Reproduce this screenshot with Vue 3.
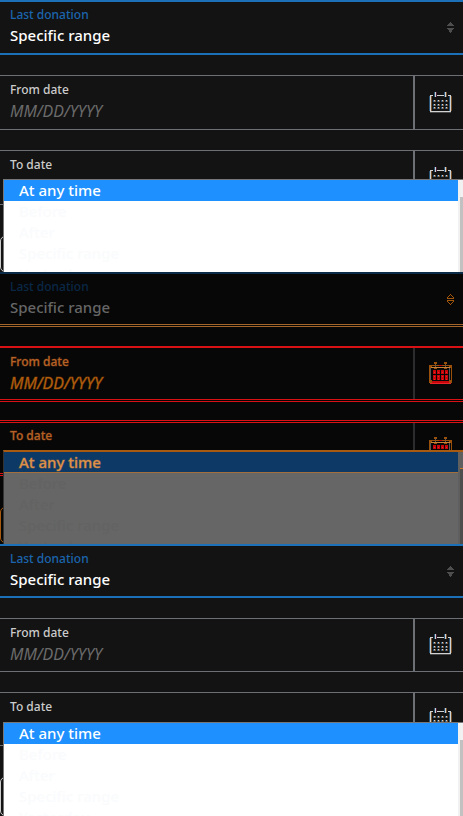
<script setup>
const panels = [
  { id: 'before', kind: 'roomy' },
  { id: 'changes', kind: 'diff' },
  { id: 'after', kind: 'compact' }
]
const options = ['At any time', 'Before', 'After', 'Specific range', 'Yesterday']
const dates = ['From date', 'To date']
const columns = [4, 8, 12, 16]
const rows = [8, 12, 15]
</script>

<template>
  <main class="page">
    <section v-for="p in panels" :key="p.id" class="panel" :class="p.kind">
      <div class="field range">
        <div class="copy">
          <label class="label" :for="p.id + '-range'">Last donation</label>
          <select :id="p.id + '-range'" class="control">
            <option>Specific range</option>
          </select>
        </div>
        <svg class="sorter" viewBox="0 0 7 11" width="7" height="11" aria-hidden="true" shape-rendering="crispEdges">
          <path v-if="p.kind === 'diff'" d="M3 0h1v1H3zM2 1h1v1H2zM4 1h1v1H4zM1 2h1v1H1zM5 2h1v1H5zM0 3h1v1H0zM6 3h1v1H6zM0 4h7v1H0zM0 6h7v1H0zM0 7h1v1H0zM6 7h1v1H6zM1 8h1v1H1zM5 8h1v1H5zM2 9h1v1H2zM4 9h1v1H4zM3 10h1v1H3z" />
          <template v-else>
            <path d="M3 0h1v1h1v1h1v1h1v1H0V3h1V2h1V1h1z" />
            <path d="M0 6h7v1H6v1H5v2H4v1H3v-1H2V8H1V7H0z" />
          </template>
        </svg>
      </div>

      <div v-for="(d, i) in dates" :key="d" class="field date">
        <div class="copy">
          <label class="label" :for="p.id + '-date-' + i">{{ d }}</label>
          <input :id="p.id + '-date-' + i" class="control" type="text" placeholder="MM/DD/YYYY" />
        </div>
        <button class="picker" type="button" :aria-label="d">
          <svg v-if="p.kind === 'diff'" class="calendar" viewBox="0 0 23 23" width="23" height="23" aria-hidden="true" shape-rendering="crispEdges">
            <path class="steel" d="M1 6h1v14H1zM20 6h1v14h-1zM6 2h1v5H6zM16 2h1v5h-1z" />
            <path class="rust" d="M5 0h3v2H5zM15 0h3v2h-3zM0 3h23v1H0zM0 4h3v2H0zM20 4h3v2h-3zM0 6h1v12H0zM22 6h1v12h-1zM5 6h3v1H5zM15 6h3v1h-3zM0 18h3v3H0zM20 18h3v3h-3z" />
            <path class="amber" d="M2 5h19v1H2z" />
            <path class="red" d="M10 3h3v1h-3zM3 19h17v2H3z" />
            <path class="bright" d="M1 21h21v1H1z" />
            <g v-for="x in columns" :key="x">
              <path class="red" :d="`M${x} 8h3v4h-3zM${x} 13h3v5h-3z`" />
              <path class="bright" :d="`M${x + 1} 10h1v1h-1zM${x + 1} 14h1v1h-1zM${x + 1} 17h1v1h-1z`" />
            </g>
          </svg>
          <svg v-else class="calendar" viewBox="0 0 23 22" width="23" height="22" aria-hidden="true" shape-rendering="crispEdges">
            <path class="cool" d="M0 4h1v15H0zM20 4h1v15h-1zM5 0h1v5H5zM15 0h1v5h-1z" />
            <path class="warm" d="M2 4h1v15H2zM22 4h1v15h-1zM17 0h1v5h-1z" />
            <path class="plum" d="M7 0h1v5H7z" />
            <path class="ink" d="M1 3h3v1H2v15h19V4h-2V3h3v17H1zM8 3h7v1H8zM6 0h1v5H6zM16 0h1v5h-1z" />
            <template v-for="y in rows" :key="y">
              <g v-for="x in columns" :key="x">
                <rect class="cool" :x="x" :y="y" width="1" height="2" />
                <rect class="warm" :x="x + 2" :y="y" width="1" height="2" />
                <rect class="ink" :x="x + 1" :y="y" width="1" height="1" />
                <rect class="dim" :x="x + 1" :y="y + 1" width="1" height="1" />
              </g>
            </template>
            <path class="shade" d="M1 20h21v1H1z" />
          </svg>
        </button>
        <div v-if="i === 1" class="menu">
          <ul class="options" role="listbox" aria-label="Last donation">
            <li v-for="(o, n) in options" :key="o" role="option" :aria-selected="n === 0" class="option">{{ o }}</li>
          </ul>
          <div class="track"><div class="thumb"></div></div>
        </div>
      </div>
      <div class="outline"></div>
    </section>
  </main>
</template>

<style>
body {
  margin: 0;
  background: #131313;
}
</style>

<style scoped>
.page {
  display: grid;
  grid-template-rows: repeat(3, minmax(0, 1fr));
  height: 100vh;
  min-height: 600px;
  font-family: "Noto Sans", sans-serif;
  font-weight: 500;
}
.panel {
  --row: 55px;
  --blue: #1b70b8;
  --line: #6c6f73;
  --label: #cccccc;
  --placeholder: #6b6b6b;
  overflow: hidden;
  background: #131313;
}
.panel.compact {
  --row: 54px;
}
.field {
  box-sizing: border-box;
  position: relative;
  display: flex;
  height: var(--row);
  margin-bottom: 20px;
  border-top: 1px solid var(--line);
  border-bottom: 1px solid var(--line);
}
.range {
  align-items: center;
  border-top: 2px solid var(--blue);
  border-bottom: 2px solid var(--blue);
}
.copy {
  display: flex;
  flex: 1;
  flex-direction: column;
  align-self: stretch;
  min-width: 0;
  padding: 5px 0 0 10px;
}
.range .copy {
  padding-top: 4px;
}
.label {
  font-size: 12px;
  line-height: 18px;
  color: var(--label);
}
.range .label {
  color: #1b65ae;
}
.control {
  appearance: none;
  width: 100%;
  height: 24px;
  margin: 0;
  padding: 0;
  border: 0;
  outline: 0;
  background: transparent;
  font-family: inherit;
  font-size: 15px;
  font-weight: 500;
  line-height: 24px;
  color: #ffffff;
}
.range .control {
  height: 22px;
  line-height: 22px;
}
.control::placeholder {
  font-size: 16px;
  font-weight: 400;
  font-style: italic;
  color: var(--placeholder);
  opacity: 1;
}
.sorter {
  margin-right: 9px;
  fill: #4e4e4e;
}
.picker {
  box-sizing: border-box;
  display: flex;
  flex: 0 0 50px;
  justify-content: center;
  align-items: center;
  margin: 0;
  padding: 0 0 0 2px;
  border: 0;
  border-left: 2px solid var(--line);
  background: transparent;
}
.ink {
  fill: #d2d2d2;
}
.cool {
  fill: #285579;
}
.warm {
  fill: #775129;
}
.plum {
  fill: #4a1f35;
}
.dim {
  fill: #777777;
}
.shade {
  fill: #4b4b4b;
}
.steel {
  fill: #56585a;
}
.rust {
  fill: #9a500a;
}
.amber {
  fill: #c98038;
}
.red {
  fill: #c80508;
}
.bright {
  fill: #e8252a;
}
.menu {
  position: absolute;
  z-index: 1;
  top: 28px;
  right: 0;
  left: 3px;
  display: flex;
  height: 120px;
  border-top: 1px solid #777777;
  border-left: 1px solid #777777;
  background: #ffffff;
}
.compact .menu {
  top: 29px;
}
.options {
  flex: 1;
  margin: 0;
  padding: 0;
  list-style: none;
}
.option {
  padding-left: 15px;
  font-size: 15px;
  line-height: 21px;
  color: #fafbfd;
}
.option:first-child {
  background: #1e90ff;
  color: #ffffff;
}
.track {
  box-sizing: border-box;
  width: 5px;
  padding: 17px 0 0 2px;
  background: #f1f1f1;
}
.thumb {
  height: 100%;
  background: #c1c1c1;
}
.outline {
  box-sizing: border-box;
  height: 36px;
  margin: 31px 0 0;
  border: 1px solid #cccccc;
  border-radius: 5px;
}
.compact .outline {
  height: 39px;
}

.diff {
  --blue: #0b2c49;
  --label: #b5652a;
  --placeholder: #b5620f;
  background: #070707;
}
.diff .range {
  height: 55px;
  margin-bottom: 19px;
  border-bottom: 3px double #a3642a;
}
.diff .range .label {
  color: #0a2746;
}
.diff .range .control {
  color: #666666;
}
.diff .date {
  height: 56px;
  margin-bottom: 18px;
  border-top: 2px solid #d91014;
  border-bottom: 3px double #d91014;
}
.diff .date .label {
  -webkit-text-stroke: 1px #bd5a1c55;
}
.diff .date .control::placeholder {
  -webkit-text-stroke: 1px #a8530866;
}
.diff .date + .date {
  border-top: 3px double #d91014;
}
.diff .date + .date .copy {
  padding-top: 4px;
}
.diff .picker {
  border-left-color: #2c2c2f;
}
.diff .sorter {
  fill: #a3560b;
}
.diff .menu {
  top: 27px;
  border-top: 2px solid #a85a10;
  border-left-color: #333333;
  background: #666666;
}
.diff .option {
  color: #636363;
}
.diff .option:first-child {
  border-bottom: 1px solid #a3703d;
  background: #0d3966;
  color: #e0944b;
  line-height: 20px;
  -webkit-text-stroke: 1px #d98a4066;
}
.diff .track {
  padding-top: 16px;
  background: #5f5f5f;
}
.diff .thumb {
  border-top: 1px solid #c77b30;
  background: #4d4d4d;
}
.diff .outline {
  border-color: #a85a10;
}
</style>
